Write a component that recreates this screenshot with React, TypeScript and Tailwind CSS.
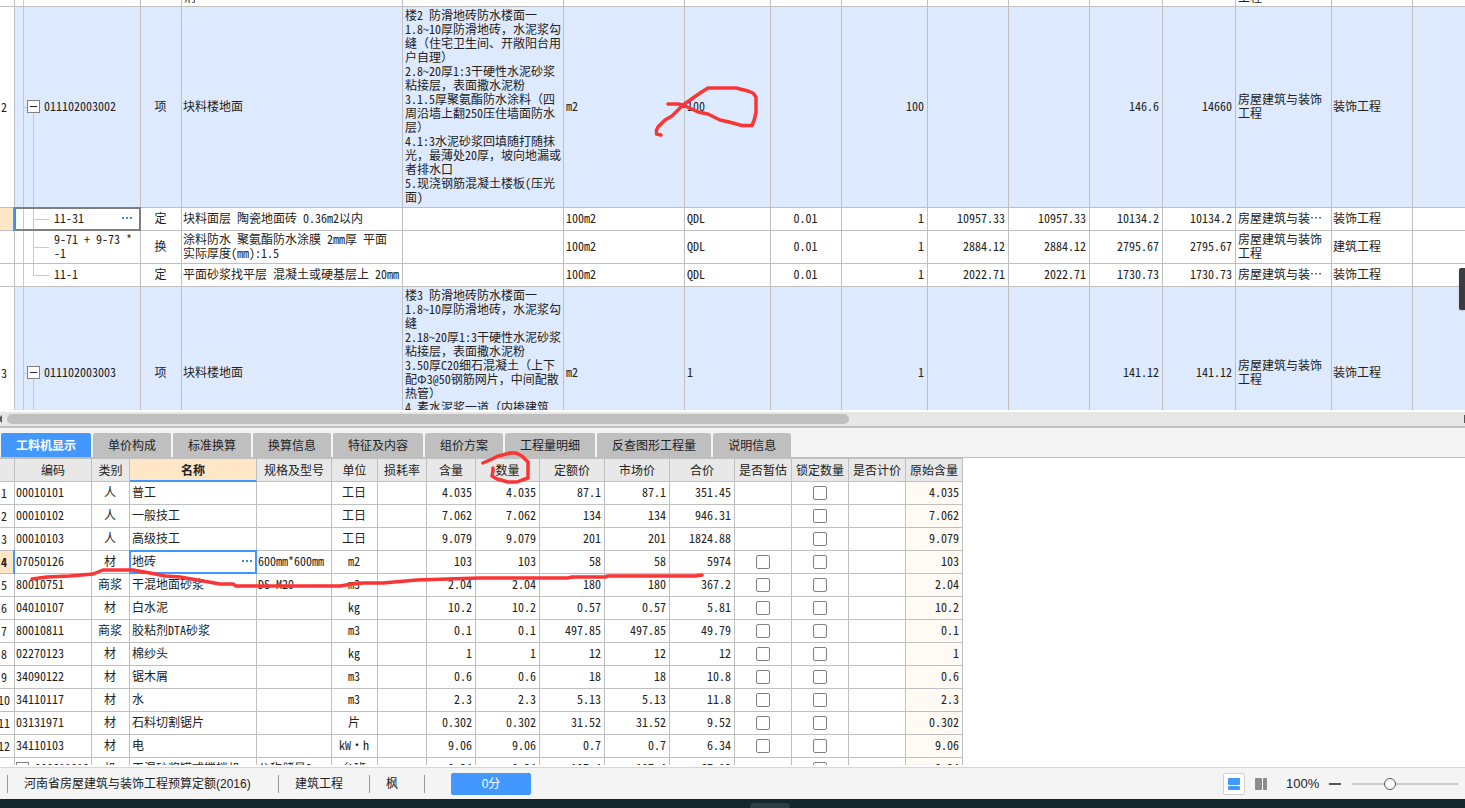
import { useState, type ReactNode } from "react";
import clsx from "clsx";

interface QuotaRow {
  no?: string;
  kind: "item" | "child";
  code: string;
  last?: boolean;
  selected?: boolean;
  type: string;
  name: string;
  feature?: string;
  unit: string;
  expr: string;
  ratio?: string;
  qty: string;
  price?: string;
  total?: string;
  unitPrice: string;
  sum: string;
  major: string;
  category: string;
  height: string;
}

interface Material {
  code: string;
  type: string;
  name: string;
  spec?: string;
  unit: string;
  content: string;
  price: string;
  market: string;
  total: string;
  estimable?: boolean;
  group?: boolean;
}

const FEATURE_2 = `楼2 防滑地砖防水楼面一
1.8~10厚防滑地砖，水泥浆勾
缝（住宅卫生间、开敞阳台用
户自理）
2.8~20厚1:3干硬性水泥砂浆
粘接层，表面撒水泥粉
3.1.5厚聚氨酯防水涂料（四
周沿墙上翻250压住墙面防水
层）
4.1:3水泥砂浆回填随打随抹
光，最薄处20厚，坡向地漏或
者排水口
5.现浇钢筋混凝土楼板(压光
面)`;

const FEATURE_3 = `楼3 防滑地砖防水楼面一
1.8~10厚防滑地砖，水泥浆勾
缝
2.18~20厚1:3干硬性水泥砂浆
粘接层，表面撒水泥粉
3.50厚C20细石混凝土（上下
配Φ3@50钢筋网片，中间配散
热管）
4.素水泥浆一道（内掺建筑`;

const quotaRows: QuotaRow[] = [
  { no: "2", kind: "item", code: "011102003002", type: "项", name: "块料楼地面", feature: FEATURE_2, unit: "m2", expr: "100", qty: "100", unitPrice: "146.6", sum: "14660", major: "房屋建筑与装饰\n工程", category: "装饰工程", height: "h-[201px]" },
  { kind: "child", code: "11-31", selected: true, type: "定", name: "块料面层 陶瓷地面砖 0.36m2以内", unit: "100m2", expr: "QDL", ratio: "0.01", qty: "1", price: "10957.33", total: "10957.33", unitPrice: "10134.2", sum: "10134.2", major: "房屋建筑与装…", category: "装饰工程", height: "h-[23px]" },
  { kind: "child", code: "9-71 + 9-73 *\n-1", type: "换", name: "涂料防水 聚氨酯防水涂膜 2mm厚 平面\n实际厚度(mm):1.5", unit: "100m2", expr: "QDL", ratio: "0.01", qty: "1", price: "2884.12", total: "2884.12", unitPrice: "2795.67", sum: "2795.67", major: "房屋建筑与装饰\n工程", category: "建筑工程", height: "h-[33px]" },
  { kind: "child", code: "11-1", last: true, type: "定", name: "平面砂浆找平层 混凝土或硬基层上 20mm", unit: "100m2", expr: "QDL", ratio: "0.01", qty: "1", price: "2022.71", total: "2022.71", unitPrice: "1730.73", sum: "1730.73", major: "房屋建筑与装…", category: "装饰工程", height: "h-[23px]" },
  { no: "3", kind: "item", code: "011102003003", type: "项", name: "块料楼地面", feature: FEATURE_3, unit: "m2", expr: "1", qty: "1", unitPrice: "141.12", sum: "141.12", major: "房屋建筑与装饰\n工程", category: "装饰工程", height: "h-[173px]" },
];

const materials: Material[] = [
  { code: "00010101", type: "人", name: "普工", unit: "工日", content: "4.035", price: "87.1", market: "87.1", total: "351.45" },
  { code: "00010102", type: "人", name: "一般技工", unit: "工日", content: "7.062", price: "134", market: "134", total: "946.31" },
  { code: "00010103", type: "人", name: "高级技工", unit: "工日", content: "9.079", price: "201", market: "201", total: "1824.88" },
  { code: "07050126", type: "材", name: "地砖", spec: "600mm*600mm", unit: "m2", content: "103", price: "58", market: "58", total: "5974", estimable: true },
  { code: "80010751", type: "商浆", name: "干混地面砂浆", spec: "DS M20", unit: "m3", content: "2.04", price: "180", market: "180", total: "367.2", estimable: true },
  { code: "04010107", type: "材", name: "白水泥", unit: "kg", content: "10.2", price: "0.57", market: "0.57", total: "5.81", estimable: true },
  { code: "80010811", type: "商浆", name: "胶粘剂DTA砂浆", unit: "m3", content: "0.1", price: "497.85", market: "497.85", total: "49.79", estimable: true },
  { code: "02270123", type: "材", name: "棉纱头", unit: "kg", content: "1", price: "12", market: "12", total: "12", estimable: true },
  { code: "34090122", type: "材", name: "锯木屑", unit: "m3", content: "0.6", price: "18", market: "18", total: "10.8", estimable: true },
  { code: "34110117", type: "材", name: "水", unit: "m3", content: "2.3", price: "5.13", market: "5.13", total: "11.8", estimable: true },
  { code: "03131971", type: "材", name: "石料切割锯片", unit: "片", content: "0.302", price: "31.52", market: "31.52", total: "9.52", estimable: true },
  { code: "34110103", type: "材", name: "电", unit: "kW·h", content: "9.06", price: "0.7", market: "0.7", total: "6.34", estimable: true },
  { code: "990611010", type: "机", name: "干混砂浆罐式搅拌机", spec: "公称储量2", unit: "台班", content: "0.34", price: "197.4", market: "197.4", total: "67.12", group: true },
];

const tabs = ["工料机显示", "单价构成", "标准换算", "换算信息", "特征及内容", "组价方案", "工程量明细", "反查图形工程量", "说明信息"];

const materialHeaders = ["编码", "类别", "名称", "规格及型号", "单位", "损耗率", "含量", "数量", "定额价", "市场价", "合价", "是否暂估", "锁定数量", "是否计价", "原始含量"];

const quotaCols = [21, 126, 41, 221, 161, 121, 86, 71, 86, 81, 81, 73, 73, 96, 81];
const materialCols = [21, 77, 38, 127, 75, 46, 49, 49, 64, 65, 65, 65, 57, 57, 57, 57];

function Columns({ widths, rest }: { widths: number[]; rest?: boolean }) {
  return (
    <colgroup>
      {widths.map((width, index) => (
        <col key={index} style={{ width }} />
      ))}
      {rest ? <col /> : null}
    </colgroup>
  );
}

function Cell({ children, className }: { children?: ReactNode; className?: string }) {
  return <td className={clsx("overflow-hidden border-r border-b border-[#bfbfbf] pt-0 pr-[3px] whitespace-pre", className ?? "pl-px")}>{children}</td>;
}

function RowNumber({ children, selected }: { children?: ReactNode; selected?: boolean }) {
  return (
    <td className={clsx("border-r border-b border-[#bfbfbf] p-0 text-center", selected ? "relative bg-[#ffe6c6] font-bold" : "bg-white")}>
      {children}
      {selected ? <span className="absolute -inset-y-px -right-px z-10 w-0.5 bg-[#4097ff]" /> : null}
    </td>
  );
}

function Expander({ label }: { label: string }) {
  return (
    <button type="button" aria-label={label} className="size-[13px] shrink-0 border border-[#808080] bg-white">
      <svg viewBox="0 0 11 11" className="size-[11px]" aria-hidden="true">
        <path d="M2 5.5h7" stroke="#222" />
      </svg>
    </button>
  );
}

function MoreButton() {
  return (
    <button type="button" aria-label="更多" className="flex gap-0.5">
      <span className="size-0.5 bg-[#3d8bd0]" />
      <span className="size-0.5 bg-[#3d8bd0]" />
      <span className="size-0.5 bg-[#3d8bd0]" />
    </button>
  );
}

function CodeCell({ row }: { row: QuotaRow }) {
  return (
    <td className="relative border-r border-b border-[#bfbfbf] p-0 pb-0.5 whitespace-pre">
      <span className="absolute inset-y-0 left-2 w-px bg-[#ffc06a]" />
      {row.kind === "item" ? (
        <>
          <span className="absolute top-1/2 left-2 h-px w-1 bg-[#ffc06a]" />
          <span className="absolute top-1/2 bottom-0 left-[18px] w-px bg-[#ffc06a]" />
          <div className="relative flex items-center gap-1 pl-3">
            <Expander label={`折叠 ${row.code}`} />
            <span>{row.code}</span>
          </div>
        </>
      ) : (
        <>
          <span className={clsx("absolute top-0 left-[18px] w-px bg-[#ffc06a]", row.last ? "bottom-1/2" : "bottom-0")} />
          <span className="absolute top-1/2 left-[18px] h-px w-4 bg-[#ffc06a]" />
          {row.selected ? <span className="absolute -inset-px border-2 border-[#7f7f7f]" /> : null}
          <div className="relative flex items-center justify-between pr-2 pl-[39px]">
            <span>{row.code}</span>
            {row.selected ? <MoreButton /> : null}
          </div>
        </>
      )}
    </td>
  );
}

function QuotaTable() {
  return (
    <table className="-mt-7 -ml-1.5 w-[calc(100%+6px)] table-fixed border-separate border-spacing-0">
      <Columns widths={quotaCols} rest />
      <tbody>
        <tr className="h-[35px] align-bottom">
          <RowNumber />
          <td className="relative border-r border-b border-[#bfbfbf]">
            <span className="absolute inset-y-0 left-2 w-px bg-[#ffc06a]" />
          </td>
          <Cell />
          <Cell className="pb-0.5 pl-0.5">{"楼地面\n消"}</Cell>
          {Array.from({ length: 9 }, (_, index) => (
            <Cell key={index} />
          ))}
          <Cell className="pb-0.5 pl-0.5">{"房屋建筑与装饰\n工程"}</Cell>
          <Cell />
          <Cell className="border-r-0" />
        </tr>
        {quotaRows.map((row) => (
          <tr key={row.code} className={clsx(row.height, row.kind === "item" && "bg-[#deeaff]")}>
            <RowNumber selected={row.selected}>{row.no}</RowNumber>
            <CodeCell row={row} />
            <Cell className="pb-0.5 pl-0.5 text-center">{row.type}</Cell>
            <Cell className="pb-0.5 pl-px">{row.name}</Cell>
            <Cell className="pl-0.5 align-top">
              <div className="pt-px">{row.feature}</div>
            </Cell>
            <Cell className="pb-0.5 pl-0.5">{row.unit}</Cell>
            <Cell className="pb-0.5 pl-0.5">{row.expr}</Cell>
            <Cell className="pb-0.5 pl-0.5 text-center">{row.ratio}</Cell>
            <Cell className="pb-0.5 text-right">{row.qty}</Cell>
            <Cell className="pb-0.5 text-right">{row.price}</Cell>
            <Cell className="pb-0.5 text-right">{row.total}</Cell>
            <Cell className="pb-0.5 text-right">{row.unitPrice}</Cell>
            <Cell className="pb-0.5 text-right">{row.sum}</Cell>
            <Cell className="pb-0.5 pl-0.5">{row.major}</Cell>
            <Cell className="pb-0.5 pl-px">{row.category}</Cell>
            <Cell className="border-r-0" />
          </tr>
        ))}
      </tbody>
    </table>
  );
}

function CheckCell({ label, shown }: { label: string; shown: boolean }) {
  return (
    <td className="border-r border-b border-[#bfbfbf] p-0">
      {shown ? <input type="checkbox" aria-label={label} className="mx-auto block size-3.5 appearance-none rounded-xs border border-[#808080] bg-white checked:bg-[#4097ff]" /> : null}
    </td>
  );
}

function MaterialTable() {
  const selected = 3;

  return (
    <table className="-ml-1.5 w-[969px] table-fixed border-separate border-spacing-0 border-t border-[#bfbfbf]">
      <Columns widths={materialCols} />
      <thead>
        <tr className="h-[23px] bg-[#e8e8e8]">
          <th className="border-r border-b border-[#bfbfbf] p-0" aria-label="序号" />
          {materialHeaders.map((header) => (
            <th
              key={header}
              className={clsx(
                "border-r border-[#bfbfbf] p-0 whitespace-nowrap",
                header === "名称" ? "border-b-2 border-b-[#4097ff] bg-[#ffe6c6] font-bold" : "border-b font-normal",
              )}
            >
              {header}
            </th>
          ))}
        </tr>
      </thead>
      <tbody>
        {materials.map((item, index) => (
          <tr key={item.code} className="h-[23px]">
            <RowNumber selected={index === selected}>{index + 1}</RowNumber>
            <Cell className="pb-0.5 pl-px">
              {item.group ? (
                <div className="flex items-center gap-1.5">
                  <Expander label={`折叠 ${item.code}`} />
                  {item.code}
                </div>
              ) : (
                item.code
              )}
            </Cell>
            <Cell className="pb-0.5 pl-0.5 text-center">{item.type}</Cell>
            {index === selected ? (
              <td className="relative border-r border-b border-[#bfbfbf] pt-0 pr-1 pb-0.5 pl-0.5">
                <span className="absolute -inset-px border-2 border-[#4097ff]" />
                <div className="relative flex items-center justify-between">
                  <span>{item.name}</span>
                  <MoreButton />
                </div>
              </td>
            ) : (
              <Cell className="pb-0.5 pl-0.5">{item.name}</Cell>
            )}
            <Cell className="pb-0.5 pl-px">{item.spec}</Cell>
            <Cell className="pb-0.5 pl-0.5 text-center">{item.unit}</Cell>
            <Cell />
            <Cell className="pb-0.5 text-right">{item.content}</Cell>
            <Cell className="pb-0.5 text-right">{item.content}</Cell>
            <Cell className="pb-0.5 text-right">{item.price}</Cell>
            <Cell className="pb-0.5 text-right">{item.market}</Cell>
            <Cell className="pb-0.5 text-right">{item.total}</Cell>
            <CheckCell label={`${item.name} 是否暂估`} shown={Boolean(item.estimable)} />
            <CheckCell label={`${item.name} 锁定数量`} shown />
            <Cell />
            <Cell className="bg-[#fffaf4] pb-0.5 text-right">{item.content}</Cell>
          </tr>
        ))}
      </tbody>
    </table>
  );
}

function ScrollTrack() {
  return (
    <div className="mt-0.5 flex h-3.5 shrink-0 items-center bg-[#e7e7e7]">
      <svg viewBox="0 0 2 8" className="h-2 w-0.5" aria-hidden="true">
        <path d="M2 0v8L0 6V2z" fill="#555" />
      </svg>
      <div className="mx-[5px] flex-1">
        <div className="h-2.5 w-[58%] rounded-full bg-[#bfbfbf]" />
      </div>
      <span className="h-2 w-px bg-[#555]" />
    </div>
  );
}

function StatusBar() {
  return (
    <footer className="flex h-8 shrink-0 items-center border-t border-[#d5d5d5] bg-[#f4f4f4] text-[#222]">
      <span className="ml-[7px] h-[18px] w-px bg-[#999]" />
      <span className="w-[270px] pl-4">河南省房屋建筑与装饰工程预算定额(2016)</span>
      <span className="h-[18px] w-px bg-[#999]" />
      <span className="w-[90px] pl-4">建筑工程</span>
      <span className="h-[18px] w-px bg-[#999]" />
      <span className="w-[54px] pl-4">枫</span>
      <span className="h-[18px] w-px bg-[#999]" />
      <button type="button" className="ml-[26px] h-[22px] w-20 rounded-xs bg-[#4298ff] text-white">
        0分
      </button>
      <div className="ml-auto flex items-center">
        <button type="button" aria-label="上下布局" className="flex size-[22px] items-center justify-center rounded-xs border border-[#d0d0d0] bg-white">
          <svg viewBox="0 0 12 12" className="size-3" aria-hidden="true">
            <rect width="12" height="7" rx="1" fill="#4298ff" />
            <rect y="8" width="12" height="4" rx="1" fill="#4298ff" />
          </svg>
        </button>
        <button type="button" aria-label="左右布局" className="ml-[10px]">
          <svg viewBox="0 0 12 12" className="size-3" aria-hidden="true">
            <rect width="7" height="12" rx="1" fill="#8c8c8c" />
            <rect x="8" width="4" height="12" rx="1" fill="#8c8c8c" />
          </svg>
        </button>
        <span className="ml-[19px] w-[43px] text-[13px]">100%</span>
        <button type="button" aria-label="缩小" className="h-3 w-3">
          <span className="block h-0.5 bg-[#555]" />
        </button>
        <input
          type="range"
          aria-label="缩放比例"
          min={0}
          max={100}
          defaultValue={34}
          className="mr-[7px] ml-[11px] h-3 w-[106px] appearance-none bg-transparent [&::-webkit-slider-runnable-track]:h-0.5 [&::-webkit-slider-runnable-track]:bg-[#c8c8c8] [&::-webkit-slider-thumb]:-mt-[5px] [&::-webkit-slider-thumb]:size-3 [&::-webkit-slider-thumb]:appearance-none [&::-webkit-slider-thumb]:rounded-full [&::-webkit-slider-thumb]:border [&::-webkit-slider-thumb]:border-[#555] [&::-webkit-slider-thumb]:bg-white"
        />
      </div>
    </footer>
  );
}

// Freehand red pen marks drawn over the sheet
function PenMarks() {
  return (
    <svg className="pointer-events-none absolute inset-0 size-full" fill="none" stroke="#fb3535" strokeWidth="3.5" strokeLinecap="round" strokeLinejoin="round" aria-hidden="true">
      <path d="M668 104h10l5 1 15 7 10 2 12 6 9 2 13 3.5h10l2-5 2-8V97l-3-4-5-2-4-1-8-2h-28l-8 5-17 12-11 11-7 4-7 7-1.500 3v4l4.500 1" />
      <path d="M483 463l9-4 6-3 5-1 7-2h6l6 3 6 6v16l-6 2-5 2h-9l-11-3-5-3 1-5v-3" />
      <path d="M32 579l15-2 23-1 23-2 10-4h30l17 3 15 3 15 1 23 4 17 3h13l3 2h104l12-2 11-1h20l34-3 30-1 33-1h88l4-1h33l3-1h87l7-1" />
    </svg>
  );
}

export default function App() {
  const [activeTab, setActiveTab] = useState(tabs[0]);

  return (
    <div lang="zh-CN" className="relative flex h-screen flex-col overflow-hidden bg-white font-['Liberation_Sans','Noto_Sans_CJK_SC',sans-serif] text-xs leading-[14px] text-[#222]">
      <section className="h-[410px] shrink-0 overflow-hidden font-['Noto_Sans_Mono_CJK_SC','Noto_Sans_CJK_SC',monospace]">
        <QuotaTable />
      </section>
      <ScrollTrack />

      <nav role="tablist" className="flex shrink-0 gap-0.5 border-t-2 border-b border-[#bfbfbf] bg-[#f4f4f4] pt-[5px] pl-px">
        {tabs.map((tab) => (
          <button
            key={tab}
            type="button"
            role="tab"
            aria-selected={tab === activeTab}
            onClick={() => setActiveTab(tab)}
            className={clsx("h-6 rounded-t-xs px-[15px] pt-0.5 whitespace-nowrap", tab === activeTab ? "bg-[#4298ff] font-bold text-white" : "bg-[#bfbfbf]")}
          >
            {tab}
          </button>
        ))}
      </nav>

      <section className="mb-0.5 min-h-0 flex-1 overflow-hidden font-['Noto_Sans_Mono_CJK_SC','Noto_Sans_CJK_SC',monospace]">
        <MaterialTable />
      </section>

      <StatusBar />
      <div className="flex h-[9px] shrink-0 items-end bg-[#13282e] pl-[51.2%]">
        <span className="h-[5px] w-10 rounded-t-sm bg-[#2b3f45]" />
      </div>

      <span className="absolute top-[268px] right-0 h-[42px] w-1.5 rounded-l-xs bg-[#3a3c3e] shadow" />
      <PenMarks />
    </div>
  );
}
